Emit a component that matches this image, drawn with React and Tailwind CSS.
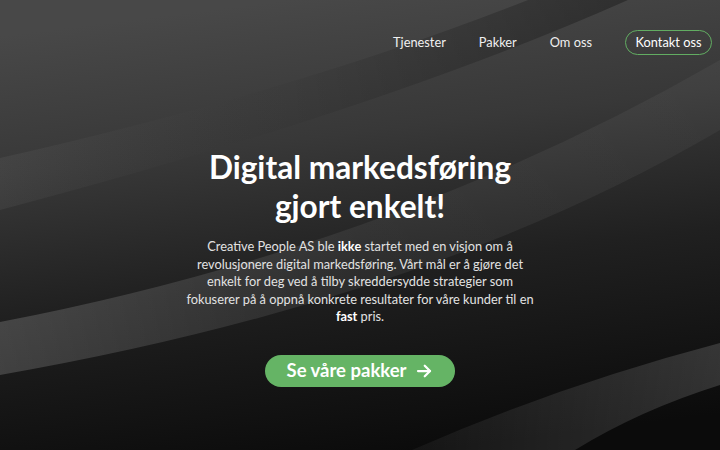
import React from "react";

function Background() {
  return (
    <svg
      className="absolute inset-0 w-full h-full"
      viewBox="0 0 720 450"
      preserveAspectRatio="none"
      aria-hidden="true"
    >
      <defs>
        <linearGradient id="base" x1="0.4" y1="0" x2="0.6" y2="1">
          <stop offset="0" stopColor="#484848" />
          <stop offset="0.3" stopColor="#383838" />
          <stop offset="0.6" stopColor="#202020" />
          <stop offset="1" stopColor="#0b0b0b" />
        </linearGradient>
        <linearGradient id="bandA" x1="0" y1="0" x2="1" y2="0">
          <stop offset="0" stopColor="#ffffff" stopOpacity="0.05" />
          <stop offset="0.45" stopColor="#000000" stopOpacity="0.03" />
          <stop offset="1" stopColor="#000000" stopOpacity="0.3" />
        </linearGradient>
        <linearGradient id="bandB" x1="0" y1="0" x2="1" y2="0">
          <stop offset="0" stopColor="#ffffff" stopOpacity="0.17" />
          <stop offset="0.5" stopColor="#ffffff" stopOpacity="0.06" />
          <stop offset="1" stopColor="#ffffff" stopOpacity="0.04" />
        </linearGradient>
        <linearGradient id="bandC" x1="0" y1="0" x2="1" y2="0">
          <stop offset="0" stopColor="#ffffff" stopOpacity="0.04" />
          <stop offset="1" stopColor="#ffffff" stopOpacity="0.15" />
        </linearGradient>
      </defs>
      <rect x="0" y="0" width="720" height="450" fill="url(#base)" />
      <path d="M0,158 Q300,90 528,0 L628,0 Q380,110 0,210 Z" fill="url(#bandA)" />
      <path d="M0,322 Q400,245 720,60 L720,130 Q430,300 0,375 Z" fill="url(#bandB)" />
      <path d="M720,343 Q560,385 412,450 L575,450 Q640,410 720,385 Z" fill="url(#bandC)" />
    </svg>
  );
}

export default function App() {
  return (
    <div
      className="relative w-full h-[450px] overflow-hidden text-white"
      style={{ fontFamily: "Lato, 'Open Sans', sans-serif" }}
    >
      <Background />
      <div className="relative flex flex-col h-full">
        <nav className="flex items-center justify-end pt-[30px] pr-2 text-[12.8px] text-[#f0f0f0]">
          <a className="mr-[33px]">Tjenester</a>
          <a className="mr-[33px]">Pakker</a>
          <a className="mr-[33px]">Om oss</a>
          <a className="h-[25px] w-[87px] flex items-center justify-center rounded-full border border-[#62ad62] text-white">
            Kontakt oss
          </a>
        </nav>
        <main className="flex flex-col items-center mt-[93px]">
          <h1 className="text-[31.6px] leading-[39px] font-bold text-center text-white">
            Digital markedsføring
            <br />
            gjort enkelt!
          </h1>
          <p className="mt-[12px] text-[12.8px] leading-[17.5px] text-center text-[#e2e2e2]">
            Creative People AS ble <b className="font-bold text-white">ikke</b> startet med en visjon om å
            <br />
            revolusjonere digital markedsføring. Vårt mål er å gjøre det
            <br />
            enkelt for deg ved å tilby skreddersydde strategier som
            <br />
            fokuserer på å oppnå konkrete resultater for våre kunder til en
            <br />
            <b className="font-bold text-white">fast</b> pris.
          </p>
          <button className="mt-[29px] w-[190px] h-[32px] rounded-full bg-[#65b465] flex items-center justify-center gap-[9px] text-white text-[18.5px] font-bold">
            <span>Se våre pakker</span>
            <svg width="18" height="18" viewBox="0 0 24 24" fill="none" stroke="currentColor" strokeWidth="3" strokeLinecap="round" strokeLinejoin="round">
              <path d="M4 12h16" />
              <path d="M13 5l7 7-7 7" />
            </svg>
          </button>
        </main>
      </div>
    </div>
  );
}
